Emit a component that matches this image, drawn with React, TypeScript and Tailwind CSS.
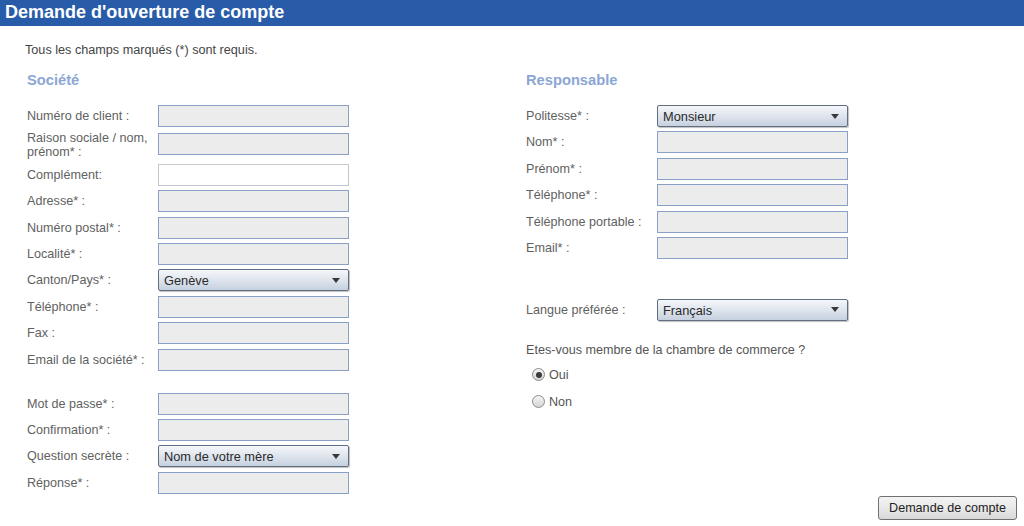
import React from "react";

const Input = ({ white = false }: { white?: boolean }) => (
  <div
    className={
      white
        ? "w-[191px] h-[22px] bg-white border border-[#c4c8ce]"
        : "w-[191px] h-[22px] bg-[#ececec] border border-[#8aa0c6]"
    }
  />
);

const Select = ({ value }: { value: string }) => (
  <div className="w-[191px] h-[22px] flex items-center justify-between rounded-[2px] border border-[#5f6e80] bg-gradient-to-b from-[#f5f7fa] via-[#dfe5ee] to-[#c6d0de] shadow-[1px_1px_1px_rgba(0,0,0,0.25)] pl-[5px] pr-[8px]">
    <span className="text-[12.8px] leading-[14px] text-[#2a2a2a] pt-[2px]">{value}</span>
    <svg width="8" height="5" viewBox="0 0 8 5">
      <polygon points="0,0 8,0 4,5" fill="#3a3a3a" />
    </svg>
  </div>
);

const Row = ({ label, children }: { label: React.ReactNode; children: React.ReactNode }) => (
  <div className="flex items-start">
    <div className="w-[131px] shrink-0 pt-[4px] text-[12.6px] leading-[14px] text-[#616161]">{label}</div>
    {children}
  </div>
);

const Radio = ({ checked, label }: { checked?: boolean; label: string }) => (
  <div className="flex items-center h-[18px] pl-[6px]">
    <div className="w-[13px] h-[13px] rounded-full border border-[#8c8c8c] bg-gradient-to-b from-[#f4f4f4] to-[#d6d6d6] flex items-center justify-center">
      {checked && <div className="w-[6px] h-[6px] rounded-full bg-[#3c3c3c]" />}
    </div>
    <span className="ml-[4px] text-[12.6px] leading-[14px] text-[#555]">{label}</span>
  </div>
);

export default function App() {
  return (
    <div className="w-[1024px] h-[526px] bg-white overflow-hidden font-['Liberation_Sans',Arial,sans-serif]">
      <div className="h-[26px] bg-[#285ca9] text-white font-bold text-[18px] leading-[25px] pl-[5px]">
        Demande d'ouverture de compte
      </div>
      <p className="ml-[25px] mt-[17px] text-[12.65px] leading-[14px] text-[#444]">
        Tous les champs marqués (*) sont requis.
      </p>
      <div className="flex pl-[27px] mt-[15px]">
        {/* Left column */}
        <div className="w-[499px] shrink-0">
          <h2 className="text-[14.7px] leading-[16px] font-bold text-[#8ca6d4]">Société</h2>
          <div className="mt-[17px] flex flex-col gap-[4.4px]">
            <Row label="Numéro de client :">
              <Input />
            </Row>
            <div className="flex items-start">
              <div className="w-[131px] shrink-0 text-[12.6px] leading-[14px] text-[#616161]">
                Raison sociale / nom,
                <br />
                prénom* :
              </div>
              <div className="mt-[2px]">
                <Input />
              </div>
            </div>
            <Row label="Complément:">
              <Input white />
            </Row>
            <Row label="Adresse* :">
              <Input />
            </Row>
            <Row label="Numéro postal* :">
              <Input />
            </Row>
            <Row label="Localité* :">
              <Input />
            </Row>
            <Row label="Canton/Pays* :">
              <Select value="Genève" />
            </Row>
            <Row label="Téléphone* :">
              <Input />
            </Row>
            <Row label="Fax :">
              <Input />
            </Row>
            <Row label="Email de la société* :">
              <Input />
            </Row>
          </div>
          <div className="mt-[22px] flex flex-col gap-[4.4px]">
            <Row label="Mot de passe* :">
              <Input />
            </Row>
            <Row label="Confirmation* :">
              <Input />
            </Row>
            <Row label="Question secrète :">
              <Select value="Nom de votre mère" />
            </Row>
            <Row label="Réponse* :">
              <Input />
            </Row>
          </div>
        </div>

        {/* Right column */}
        <div className="w-[491px] shrink-0 flex flex-col">
          <h2 className="text-[14.7px] leading-[16px] font-bold text-[#8ca6d4]">Responsable</h2>
          <div className="mt-[17px] flex flex-col gap-[4.4px]">
            <Row label="Politesse* :">
              <Select value="Monsieur" />
            </Row>
            <Row label="Nom* :">
              <Input />
            </Row>
            <Row label="Prénom* :">
              <Input />
            </Row>
            <Row label="Téléphone* :">
              <Input />
            </Row>
            <Row label="Téléphone portable :">
              <Input />
            </Row>
            <Row label="Email* :">
              <Input />
            </Row>
          </div>
          <div className="mt-[40px]">
            <Row label="Langue préférée :">
              <Select value="Français" />
            </Row>
          </div>
          <p className="mt-[22px] text-[12.6px] leading-[14px] text-[#555]">
            Etes-vous membre de la chambre de commerce ?
          </p>
          <div className="mt-[9px] flex flex-col gap-[9px]">
            <Radio checked label="Oui" />
            <Radio label="Non" />
          </div>
          <div className="mt-[85px] flex justify-end">
            <button className="w-[139px] h-[24px] rounded-[3px] border border-[#707070] bg-gradient-to-b from-[#f3f3f3] via-[#e9e9e9] to-[#d8d8d8] text-[12.6px] text-[#222] leading-[14px]">
              Demande de compte
            </button>
          </div>
        </div>
      </div>
    </div>
  );
}
